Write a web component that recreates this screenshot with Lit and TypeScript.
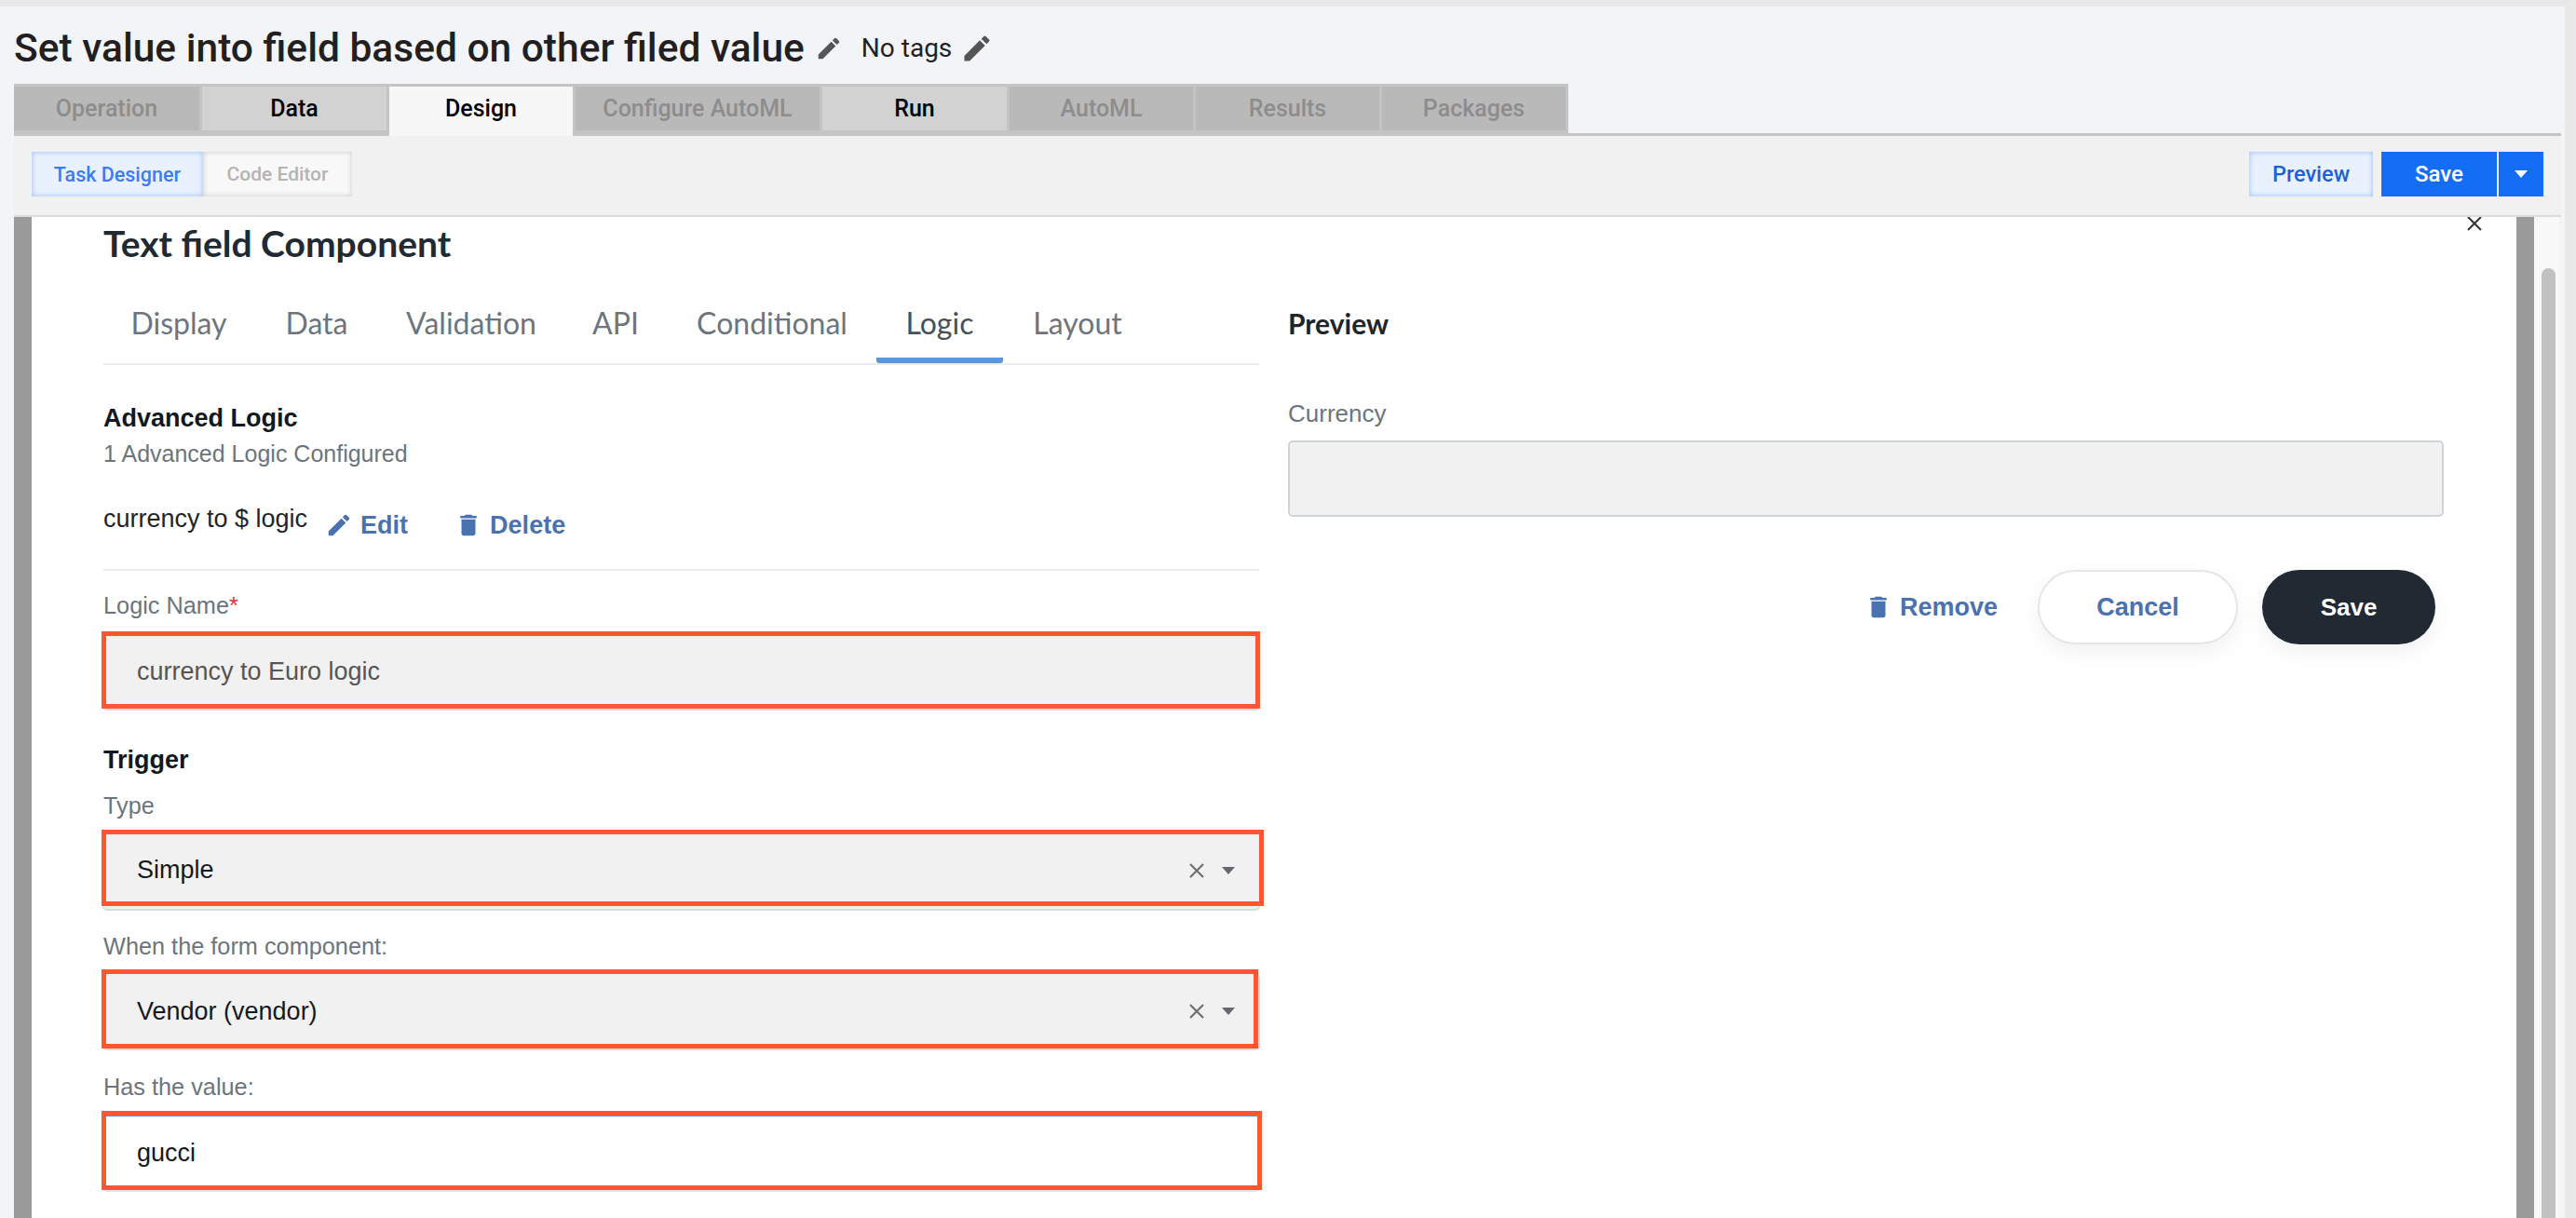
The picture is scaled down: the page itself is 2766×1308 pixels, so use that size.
import { LitElement, css, html, svg } from 'lit';
import { customElement } from 'lit/decorators.js';

const pencil = svg`<path d="M3 17.25V21h3.75L17.81 9.94l-3.75-3.75L3 17.25zM20.71 7.04a1 1 0 0 0 0-1.41l-2.34-2.34a1 1 0 0 0-1.41 0l-1.83 1.83 3.75 3.75 1.83-1.83z"/>`;
const trash = svg`<path d="M6 19c0 1.1.9 2 2 2h8c1.1 0 2-.9 2-2V7H6v12zM19 4h-3.5l-1-1h-5l-1 1H5v2h14V4z"/>`;

const icon = (body: unknown, cls: string) =>
  html`<svg class=${cls} viewBox="0 0 24 24" fill="currentColor">${body}</svg>`;

const closeIcon = (cls: string) =>
  html`<svg class=${cls} viewBox="0 0 18 18" fill="none" stroke="currentColor" stroke-width="2.2"><path d="M2 2l14 14M16 2L2 16"/></svg>`;

const caretIcon = (cls: string) =>
  html`<svg class=${cls} viewBox="0 0 14 8" fill="currentColor"><path d="M0 0h14L7 8z"/></svg>`;

const TABS = [
  { label: 'Operation', kind: 'off', width: 199 },
  { label: 'Data', kind: 'on', width: 198 },
  { label: 'Design', kind: 'active', width: 197 },
  { label: 'Configure AutoML', kind: 'off', width: 262 },
  { label: 'Run', kind: 'on', width: 198 },
  { label: 'AutoML', kind: 'off', width: 197 },
  { label: 'Results', kind: 'off', width: 197 },
  { label: 'Packages', kind: 'off', width: 197 },
];

const EDITOR_TABS = [
  { label: 'Display', width: 162 },
  { label: 'Data', width: 134 },
  { label: 'Validation', width: 198 },
  { label: 'API', width: 112 },
  { label: 'Conditional', width: 224 },
  { label: 'Logic', width: 136, active: true },
  { label: 'Layout', width: 160 },
];

@customElement('app-root')
export class AppRoot extends LitElement {
  static styles = css`
    :host {
      display: block;
      width: 2766px;
      height: 1308px;
      box-sizing: border-box;
      padding-top: 7px;
      overflow: hidden;
      background: #e8e8e8;
      font-family: 'Liberation Sans', Arial, sans-serif;
    }

    .shell {
      width: 2754px;
      height: 1301px;
      background: #f2f4f8;
      display: flex;
      flex-direction: column;
      padding-left: 15px;
      box-sizing: border-box;
    }

    .head {
      height: 83px;
      box-sizing: border-box;
      padding-top: 7px;
      display: flex;
      align-items: center;
      font-family: Roboto, sans-serif;
      color: #231f20;
    }

    .head h1 {
      margin: 0;
      font-size: 42.5px;
      font-weight: 500;
      line-height: 50px;
      white-space: nowrap;
    }

    .head .ico-title {
      width: 30px;
      height: 30px;
      margin: 0 20px 0 11px;
      color: #555;
    }

    .tags {
      font-size: 28px;
      line-height: 40px;
      color: #222;
    }

    .head .ico-tags {
      width: 36px;
      height: 36px;
      margin-left: 9px;
      color: #555;
    }

    .tabs {
      display: flex;
      height: 53px;
      box-sizing: border-box;
      width: 1669px;
      background: #c4c4c4;
      border-top: 3px solid #c4c4c4;
      font-family: Roboto, sans-serif;
      font-size: 25px;
      font-weight: 500;
      gap: 3px;
      position: relative;
      z-index: 1;
    }

    .tab {
      display: flex;
      align-items: center;
      justify-content: center;
      height: 47px;
      white-space: nowrap;
    }

    .tab.off {
      background: #b9b9b9;
      color: #8d8d8d;
    }

    .tab.on {
      background: #d2d2d2;
      color: #000;
    }

    .tab.active {
      height: 53px;
      padding-bottom: 6px;
      box-sizing: border-box;
      background: #f7f7f7;
      color: #000;
    }

    .toolbar {
      width: 2735px;
      height: 90px;
      box-sizing: border-box;
      border-top: 3px solid #c4c4c4;
      border-bottom: 2px solid #dcdcdc;
      background: #f1f1f1;
      padding: 17px 19px 0;
      display: flex;
      font-family: Roboto, sans-serif;
      font-weight: 500;
    }

    .tool {
      height: 48px;
      display: flex;
      align-items: center;
      justify-content: center;
      box-sizing: border-box;
      font-size: 21.5px;
    }

    .tool.sel {
      width: 184px;
      color: #3b7df3;
      background: #e9f1fe;
      box-shadow: inset 0 0 5px 1px #a9c8fb;
    }

    .tool.idle {
      width: 160px;
      font-size: 21px;
      color: #b4b4b4;
      background: #f8f8f8;
      box-shadow: inset 0 0 5px 1px #d4d4d4;
    }

    .tool.preview {
      width: 133px;
      margin-left: auto;
      color: #1c62d6;
      font-size: 23.5px;
      background: #e9f1fe;
      box-shadow: inset 0 0 5px 1px #a9c8fb;
    }

    .tool.save {
      width: 124px;
      margin-left: 9px;
      color: #fff;
      font-size: 24px;
      background: #136ef5;
    }

    .tool.drop {
      width: 48px;
      margin-left: 2px;
      color: #fff;
      background: #136ef5;
    }

    .ico-drop {
      width: 14px;
      height: 8px;
    }

    .body {
      flex: 1;
      width: 2733px;
      min-height: 0;
      display: flex;
    }

    .gutter {
      width: 19px;
      background: #9a9a9a;
    }

    .sheet {
      flex: 1;
      position: relative;
      background: #fff;
      display: grid;
      grid-template-columns: 1241px 1241px;
      column-gap: 31px;
      padding-left: 77px;
      overflow: hidden;
    }

    .track {
      width: 27px;
      background: #f8f8f8;
      padding: 55px 4px 0 8px;
      box-sizing: border-box;
    }

    .thumb {
      height: 100%;
      background: #c1c1c1;
      border-radius: 8px 8px 0 0;
    }

    .close {
      position: absolute;
      top: -2px;
      left: 2614px;
      width: 18px;
      height: 18px;
      color: #3a3a3a;
    }

    .title {
      margin: 0;
      height: 58px;
      font-family: Lato, sans-serif;
      font-size: 39px;
      font-weight: 700;
      line-height: 56px;
      color: #212932;
    }

    .edtabs {
      display: flex;
      height: 101px;
      box-sizing: border-box;
      border-bottom: 2px solid #e9ecef;
      font-family: Lato, sans-serif;
      font-size: 32px;
      color: #6c757d;
    }

    .edtab {
      display: flex;
      align-items: center;
      justify-content: center;
      height: 99px;
      box-sizing: border-box;
      padding-top: 11px;
      white-space: nowrap;
    }

    .edtab.active {
      color: #495057;
      border-bottom: 6px solid #5b95dd;
      border-radius: 0 0 3px 3px;
      padding-top: 17px;
    }

    h3 {
      margin: 0;
      font-size: 27px;
      line-height: 32px;
      font-weight: 700;
      color: #101820;
    }

    .logic-head {
      margin-top: 41px;
    }

    .count {
      margin-top: 7px;
      font-size: 25px;
      line-height: 30px;
      color: #6c757d;
    }

    .rule {
      height: 111px;
      box-sizing: border-box;
      border-bottom: 2px solid #e9ecef;
      display: flex;
      padding-top: 40px;
      font-size: 27px;
      color: #212529;
    }

    .rule-name {
      line-height: 30px;
    }

    .link {
      display: flex;
      align-items: center;
      height: 30px;
      margin-top: 7px;
      font-size: 27px;
      font-weight: 700;
      color: #4a72b0;
    }

    .link svg {
      width: 30px;
      height: 30px;
      margin-right: 8px;
    }

    .link.edit {
      margin-left: 19px;
    }

    .link.del {
      margin-left: 50px;
    }

    .lbl {
      font-size: 25.3px;
      line-height: 30px;
      color: #6c757d;
    }

    .lbl em {
      color: #d9363e;
      font-style: normal;
    }

    .lbl.name-lbl {
      margin-top: 22px;
    }

    .input {
      position: relative;
      box-sizing: border-box;
      display: flex;
      align-items: center;
      height: 80px;
      margin-top: 16px;
      padding-left: 36px;
      background: #f1f1f1;
      border-radius: 4px;
      box-shadow: 0 1px 0 1px #d8dbe0;
      font-size: 27px;
      color: #15191e;
    }

    .input.name {
      color: #555;
    }

    .input.first {
      padding-bottom: 3px;
    }

    .input.plain {
      background: #fff;
      box-shadow: inset 0 1px 0 #5b95dd, 0 1px 0 1px #e2e5ea;
    }

    .mark {
      position: absolute;
      box-sizing: border-box;
      border: 5px solid #ff5533;
      pointer-events: none;
    }

    .mark.m1 {
      inset: -3px -1px 0 -2px;
    }

    .mark.m2 {
      inset: -5px -5px 3px -2px;
    }

    .mark.m3 {
      inset: -5px 1px 0 -2px;
    }

    .mark.m4 {
      inset: -5px -3px 0 -2px;
    }

    .trigger {
      margin-top: 39px;
    }

    .f-type {
      margin-top: 18px;
    }

    .f-when {
      margin-top: 25px;
    }

    .f-has {
      margin-top: 26px;
    }

    .input.tight {
      margin-top: 15px;
    }

    .ico-x {
      position: absolute;
      left: 1165px;
      top: 31px;
      width: 18px;
      height: 18px;
      color: #6f6f6f;
    }

    .first .ico-x {
      top: 30px;
    }

    .ico-caret {
      position: absolute;
      left: 1200px;
      top: 36px;
      width: 16px;
      height: 8px;
      color: #66686f;
    }

    .first .ico-caret {
      top: 35px;
    }

    .side-title {
      margin: 96px 0 0;
      font-family: Lato, sans-serif;
      font-size: 30px;
      line-height: 36px;
      font-weight: 700;
      color: #212529;
    }

    .side-lbl {
      margin-top: 64px;
      font-size: 26px;
    }

    .side-input {
      height: 82px;
      margin-top: 14px;
      box-sizing: border-box;
      background: #f1f1f1;
      border: 2px solid #ced4da;
      border-radius: 5px;
    }

    .actions {
      display: flex;
      align-items: center;
      justify-content: flex-end;
      margin-top: 57px;
      padding-right: 9px;
    }

    .remove {
      margin: 0;
    }

    .pill {
      height: 80px;
      box-sizing: border-box;
      display: flex;
      align-items: center;
      justify-content: center;
      border-radius: 40px;
      font-size: 27px;
      font-weight: 700;
      box-shadow: 0 8px 24px rgba(0, 0, 0, 0.06);
    }

    .pill.cancel {
      width: 215px;
      margin-left: 43px;
      color: #4a72b0;
      background: #fff;
      border: 2px solid #e6e6e6;
    }

    .pill.save {
      width: 186px;
      margin-left: 26px;
      color: #fff;
      background: #212932;
      font-size: 26px;
    }
  `;

  render() {
    return html`
      <div class="shell">
        <div class="head">
          <h1>Set value into field based on other filed value</h1>
          ${icon(pencil, 'ico-title')}
          <span class="tags">No tags</span>
          ${icon(pencil, 'ico-tags')}
        </div>

        <div class="tabs">
          ${TABS.map(
            (t) => html`<div class="tab ${t.kind}" style="width:${t.width}px">${t.label}</div>`
          )}
        </div>

        <div class="toolbar">
          <div class="tool sel">Task Designer</div>
          <div class="tool idle">Code Editor</div>
          <div class="tool preview">Preview</div>
          <div class="tool save">Save</div>
          <div class="tool drop">${caretIcon('ico-drop')}</div>
        </div>

        <div class="body">
          <div class="gutter"></div>
          <div class="sheet">
            ${closeIcon('close')}
            <div class="left">
              <h2 class="title">Text field Component</h2>
              <div class="edtabs">
                ${EDITOR_TABS.map(
                  (t) => html`<div class="edtab ${t.active ? 'active' : ''}" style="width:${t.width}px">${t.label}</div>`
                )}
              </div>

              <h3 class="logic-head">Advanced Logic</h3>
              <div class="count">1 Advanced Logic Configured</div>
              <div class="rule">
                <span class="rule-name">currency to $ logic</span>
                <span class="link edit">${icon(pencil, '')}Edit</span>
                <span class="link del">${icon(trash, '')}Delete</span>
              </div>

              <div class="lbl name-lbl">Logic Name<em>*</em></div>
              <div class="input name">currency to Euro logic<span class="mark m1"></span></div>

              <h3 class="trigger">Trigger</h3>
              <div class="lbl f-type">Type</div>
              <div class="input first">
                Simple
                ${closeIcon('ico-x')}${caretIcon('ico-caret')}
                <span class="mark m2"></span>
              </div>

              <div class="lbl f-when">When the form component:</div>
              <div class="input tight">
                Vendor (vendor)
                ${closeIcon('ico-x')}${caretIcon('ico-caret')}
                <span class="mark m3"></span>
              </div>

              <div class="lbl f-has">Has the value:</div>
              <div class="input plain">gucci<span class="mark m4"></span></div>
            </div>

            <div class="right">
              <h3 class="side-title">Preview</h3>
              <div class="lbl side-lbl">Currency</div>
              <div class="side-input"></div>
              <div class="actions">
                <span class="link remove">${icon(trash, '')}Remove</span>
                <div class="pill cancel">Cancel</div>
                <div class="pill save">Save</div>
              </div>
            </div>
          </div>
          <div class="gutter"></div>
          <div class="track"><div class="thumb"></div></div>
        </div>
      </div>
    `;
  }
}
